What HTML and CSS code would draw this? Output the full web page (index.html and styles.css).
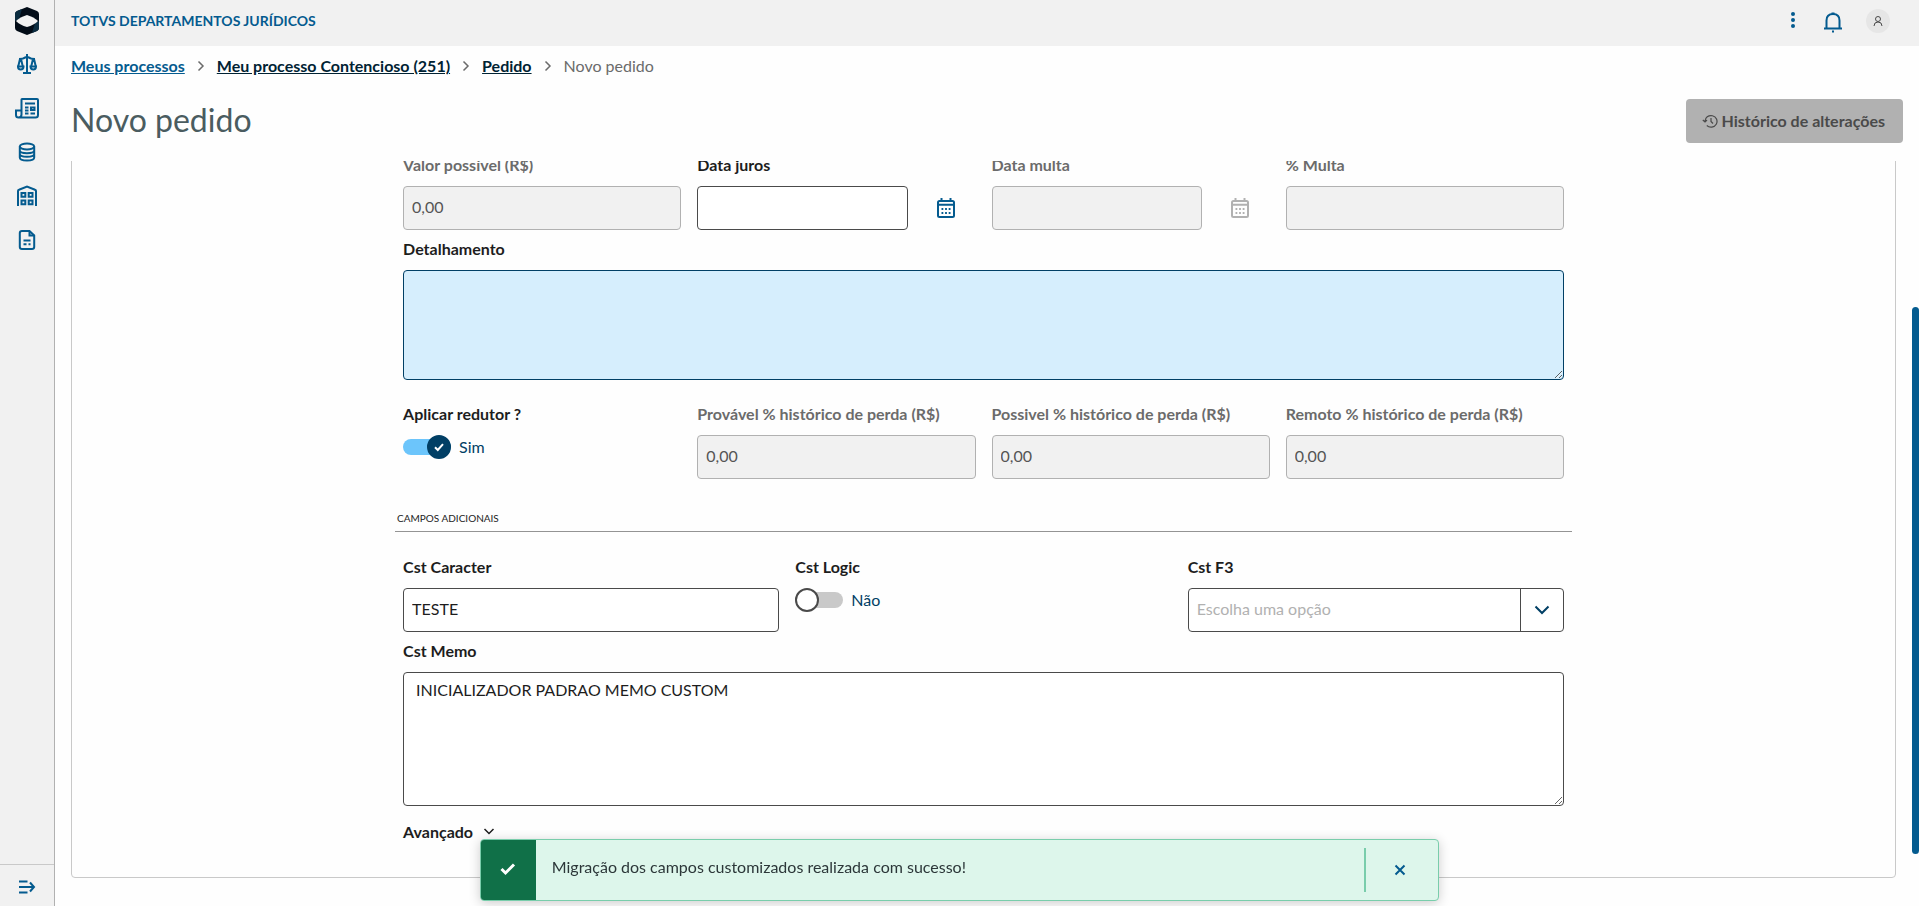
FILE: index.html
```html
<!DOCTYPE html>
<html lang="pt-BR">
<head>
    <meta charset="UTF-8">
    <meta name="viewport" content="width=device-width, initial-scale=1.0">
    <title>Novo pedido | TOTVS Departamentos Jurídicos</title>
    <link rel="stylesheet" href="styles.css">
</head>
<body>
    <div class="app">
        <aside class="sidebar">
            <svg class="logo" width="24" height="28" viewBox="0 0 24 28">
                <path d="M12 0 22 4Q24 5 24 7V21Q24 23 22 24L12 28 2 24Q0 23 0 21V7Q0 5 2 4Z" fill="#020c17"/>
                <path d="M0 7Q0 5 2 4L7 2 4 12 0 14Z" fill="#0b2c40"/>
                <path d="M24 21Q24 23 22 24L17 26 20 16 24 14Z" fill="#0b2c40"/>
                <path d="M1 14Q5 10 12 8Q19 10 23 14Q19 18 12 20Q5 18 1 14Z" fill="#f1f1f1"/>
            </svg>
            <nav class="menu">
                <a href="#" class="menu-item" aria-label="Processos">
                    <svg class="icon" width="24" height="24" viewBox="0 0 24 24">
                        <path d="M12 2V21M8 21H16M4 7Q8.500 7 10 5.500Q12 4.500 14 5.500Q15.500 7 20 7M5 7 3.200 14.500M6 7 7.800 14.500M18 7 16.200 14.500M19 7 20.800 14.500"/>
                        <path d="M3 14.500H8.500Q8.500 17.500 5.700 17.500T3 14.500ZM15.500 14.500H21Q21 17.500 18.300 17.500T15.500 14.500Z"/>
                    </svg>
                </a>
                <a href="#" class="menu-item" aria-label="Publicações">
                    <svg class="icon" width="26" height="24" viewBox="0 0 26 24">
                        <path d="M7.500 18V3.500Q7.500 3 8 3H23Q24 3 24 4V19Q24 21.500 21.500 21.500H4.500Q2 21.500 2 19V14.500H7.500V18.500Q7.500 21.500 4.500 21.500"/>
                        <path d="M11 7.500H21M11 11.500H14.500M11 14.500H14.500M11 17.500H14.500M16.500 17.500H21M17 11.500H20.500V14H17Z"/>
                    </svg>
                </a>
                <a href="#" class="menu-item" aria-label="Cadastros">
                    <svg class="icon" width="24" height="24" viewBox="0 0 24 24">
                        <ellipse cx="12" cy="6.500" rx="7.200" ry="3"/>
                        <path d="M4.800 6.500V17.500C4.800 21.500 19.200 21.500 19.200 17.500V6.500M4.800 10.500C4.800 14 19.200 14 19.200 10.500M4.800 14C4.800 17.700 19.200 17.700 19.200 14"/>
                    </svg>
                </a>
                <a href="#" class="menu-item" aria-label="Empresas">
                    <svg class="icon" width="24" height="24" viewBox="0 0 24 24">
                        <path d="M3 22V7Q3 6 4 5.700L12 2.500 20 5.700Q21 6 21 7V22"/>
                        <path d="M6.500 9H10.300V12.800H6.500ZM13.700 9H17.500V12.800H13.700ZM6.500 16.500H10.300V20.300H6.500ZM13.700 16.500H17.500V20.300H13.700Z"/>
                    </svg>
                </a>
                <a href="#" class="menu-item" aria-label="Documentos">
                    <svg class="icon" width="24" height="24" viewBox="0 0 24 24">
                        <path d="M14.500 3H7Q4.800 3 4.800 5V19Q4.800 21 7 21H17Q19.200 21 19.200 19V7.500Z"/>
                        <path d="M14.500 3V7.500H19.200M8.500 12.500H15.500M8.500 16.300H11.500M13.500 16.300H15.500"/>
                    </svg>
                </a>
            </nav>
            <button class="menu-toggle" aria-label="Expandir menu">
                <svg class="icon" width="24" height="24" viewBox="0 0 24 24">
                    <path d="M4 6.500H12.500M4 12H19M4 17.500H12.500M15 7.500 19 12 15 16.500"/>
                </svg>
            </button>
        </aside>

        <div class="page">
            <header class="toolbar">
                <span class="toolbar-title">TOTVS DEPARTAMENTOS JURÍDICOS</span>
                <div class="toolbar-actions">
                    <button class="toolbar-btn" aria-label="Mais ações">
                        <svg width="24" height="24" viewBox="0 0 24 24" fill="#045b8f">
                            <circle cx="12" cy="5" r="2"/><circle cx="12" cy="11" r="2"/><circle cx="12" cy="17" r="2"/>
                        </svg>
                    </button>
                    <button class="toolbar-btn" aria-label="Notificações">
                        <svg class="icon" width="24" height="24" viewBox="0 0 24 24">
                            <path d="M3 19.500H21M5.500 19.500V11.500Q5.500 5 12 5T18.500 11.500V19.500"/>
                            <path d="M10.500 4.500H13.500M11 22.500H13"/>
                        </svg>
                    </button>
                    <button class="toolbar-btn avatar" aria-label="Perfil">
                        <svg width="12" height="12" viewBox="0 0 12 12" fill="none" stroke="#4a4a4a">
                            <circle cx="6" cy="4" r="2.500"/><path d="M2 11Q2 7 6 7T10 11"/>
                        </svg>
                    </button>
                </div>
            </header>

            <nav class="breadcrumb">
                <a href="#" class="breadcrumb-first">Meus processos</a>
                <svg class="chevron" width="8" height="12" viewBox="0 0 8 12"><path d="M1.500 1.500 6 6 1.500 10.500"/></svg>
                <a href="#">Meu processo Contencioso (251)</a>
                <svg class="chevron" width="8" height="12" viewBox="0 0 8 12"><path d="M1.500 1.500 6 6 1.500 10.500"/></svg>
                <a href="#">Pedido</a>
                <svg class="chevron" width="8" height="12" viewBox="0 0 8 12"><path d="M1.500 1.500 6 6 1.500 10.500"/></svg>
                <span>Novo pedido</span>
            </nav>

            <div class="page-header">
                <h1>Novo pedido</h1>
                <button class="history-btn" disabled>
                    <svg width="16" height="16" viewBox="0 0 16 16" fill="none" stroke="#4a4a4a" stroke-width="1.200">
                        <path d="M3 8.500A6 5.800 0 1 1 4.800 12.500M.8 7 3 9 5 7M9 5V8.500L11 10.500"/>
                    </svg>
                    Histórico de alterações
                </button>
            </div>

            <main class="page-content">
                <div class="panel">
                    <form class="form">
                        <div class="row cols-4">
                            <div class="field">
                                <label for="valorPossivel" class="disabled">Valor possível (R$)</label>
                                <input id="valorPossivel" type="text" value="0,00" disabled>
                            </div>
                            <div class="field">
                                <label for="dataJuros">Data juros</label>
                                <div class="date-group">
                                    <input id="dataJuros" type="text">
                                    <button type="button" class="date-btn" aria-label="Abrir calendário">
                                        <svg width="20" height="24" viewBox="0 0 20 24" fill="none" stroke="currentColor" stroke-width="2">
                                            <rect x="2" y="5" width="16" height="16" rx="1.500"/>
                                            <path d="M2 8.800H18M5.500 2V5M14.500 2V5"/>
                                            <path d="M5.500 13H14.500M5.500 17H14.500" stroke-dasharray="1.800 1.800"/>
                                        </svg>
                                    </button>
                                </div>
                            </div>
                            <div class="field">
                                <label for="dataMulta" class="disabled">Data multa</label>
                                <div class="date-group">
                                    <input id="dataMulta" type="text" disabled>
                                    <button type="button" class="date-btn" aria-label="Abrir calendário" disabled>
                                        <svg width="20" height="24" viewBox="0 0 20 24" fill="none" stroke="currentColor" stroke-width="2">
                                            <rect x="2" y="5" width="16" height="16" rx="1.500"/>
                                            <path d="M2 8.800H18M5.500 2V5M14.500 2V5"/>
                                            <path d="M5.500 13H14.500M5.500 17H14.500" stroke-dasharray="1.800 1.800"/>
                                        </svg>
                                    </button>
                                </div>
                            </div>
                            <div class="field">
                                <label for="percMulta" class="disabled">% Multa</label>
                                <input id="percMulta" type="text" disabled>
                            </div>
                        </div>

                        <div class="row">
                            <div class="field">
                                <label for="detalhamento">Detalhamento</label>
                                <textarea id="detalhamento" class="detail active"></textarea>
                            </div>
                        </div>

                        <div class="row cols-4 row-spaced">
                            <div class="field">
                                <label for="redutor">Aplicar redutor ?</label>
                                <div class="switch-group">
                                    <span class="switch">
                                        <input id="redutor" type="checkbox" checked>
                                        <svg width="12" height="12" viewBox="0 0 12 12"><path d="M2 6.200 4.800 9 10 3.200"/></svg>
                                    </span>
                                    <span>Sim</span>
                                </div>
                            </div>
                            <div class="field">
                                <label for="provavel" class="disabled">Provável % histórico de perda (R$)</label>
                                <input id="provavel" type="text" value="0,00" disabled>
                            </div>
                            <div class="field">
                                <label for="possivel" class="disabled">Possivel % histórico de perda (R$)</label>
                                <input id="possivel" type="text" value="0,00" disabled>
                            </div>
                            <div class="field">
                                <label for="remoto" class="disabled">Remoto % histórico de perda (R$)</label>
                                <input id="remoto" type="text" value="0,00" disabled>
                            </div>
                        </div>

                        <h2 class="divider">CAMPOS ADICIONAIS</h2>

                        <div class="row cols-3">
                            <div class="field">
                                <label for="cstCaracter">Cst Caracter</label>
                                <input id="cstCaracter" type="text" value="TESTE">
                            </div>
                            <div class="field">
                                <label for="cstLogic">Cst Logic</label>
                                <div class="switch-group">
                                    <span class="switch">
                                        <input id="cstLogic" type="checkbox">
                                    </span>
                                    <span>Não</span>
                                </div>
                            </div>
                            <div class="field">
                                <label for="cstF3">Cst F3</label>
                                <div class="select-group">
                                    <select id="cstF3">
                                        <option>Escolha uma opção</option>
                                    </select>
                                    <span class="select-arrow">
                                        <svg width="16" height="16" viewBox="0 0 16 16"><path d="M1.500 4.500 8 11 14.500 4.500"/></svg>
                                    </span>
                                </div>
                            </div>
                        </div>

                        <div class="row">
                            <div class="field">
                                <label for="cstMemo">Cst Memo</label>
                                <textarea id="cstMemo" class="memo">INICIALIZADOR PADRAO MEMO CUSTOM</textarea>
                            </div>
                        </div>

                        <button type="button" class="advanced">
                            Avançado
                            <svg width="12" height="8" viewBox="0 0 12 8"><path d="M1.500 1 6 5.500 10.500 1"/></svg>
                        </button>
                    </form>
                </div>
            </main>
            <div class="scroll-thumb"></div>
        </div>
    </div>

    <div class="toaster" role="status">
        <div class="toaster-icon">
            <svg width="20" height="20" viewBox="0 0 20 20"><path d="M3.500 9 7.500 13 16 4.500"/></svg>
        </div>
        <p>Migração dos campos customizados realizada com sucesso!</p>
        <button class="toaster-close" aria-label="Fechar">
            <svg width="12" height="12" viewBox="0 0 12 12"><path d="M1.500 1.500 10.500 10.500M10.500 1.500 1.500 10.500"/></svg>
        </button>
    </div>
</body>
</html>
```
FILE: styles.css
```css
:root {
    --brand: #045b8f;
    --brand-dark: #013f65;
    --brand-darkest: #002233;
    --gray-bg: #f1f1f1;
    --gray-line: #c9c9c9;
    --gray-disabled: #b1b1b1;
    --gray-text: #6b6b6b;
    --text: #1d1d1d;
    --border: #4a4a4a;
    --success: #107048;
    --success-light: #ddf6eb;
    --success-line: #79cdab;
}

* {
    margin: 0;
    padding: 0;
    box-sizing: border-box;
}

body {
    background-color: #fefefe;
    color: var(--text);
    font-family: Lato, 'Open Sans', sans-serif;
    font-size: 16px;
    line-height: 24px;
}

button,
input,
select,
textarea {
    font: inherit;
    color: inherit;
}

button {
    border: none;
    background: none;
    cursor: pointer;
}

svg {
    display: block;
    flex-shrink: 0;
}

.icon {
    fill: none;
    stroke: var(--brand);
    stroke-width: 2;
}

.app {
    display: flex;
    height: 100vh;
}

/* Sidebar */
.sidebar {
    width: 55px;
    flex-shrink: 0;
    display: flex;
    flex-direction: column;
    align-items: center;
    padding-top: 7px;
    background-color: var(--gray-bg);
    border-right: 1px solid var(--gray-disabled);
}

.menu {
    flex-grow: 1;
    margin-top: 7px;
}

.menu-item {
    height: 44px;
    display: flex;
    align-items: center;
    justify-content: center;
}

.menu-toggle {
    width: 100%;
    height: 42px;
    padding-top: 2px;
    display: flex;
    align-items: center;
    justify-content: center;
    border-top: 1px solid var(--gray-line);
}

/* Page */
.page {
    position: relative;
    flex-grow: 1;
    min-width: 0;
    display: flex;
    flex-direction: column;
}

.toolbar {
    height: 46px;
    flex-shrink: 0;
    display: flex;
    justify-content: space-between;
    align-items: center;
    padding: 0 29px 4px 16px;
    background-color: var(--gray-bg);
}

.toolbar-title {
    font-size: 14px;
    font-weight: 700;
    color: var(--brand);
}

.toolbar-actions {
    display: flex;
    align-items: center;
    gap: 16px;
}

.toolbar-btn {
    width: 24px;
    height: 24px;
}

.avatar {
    display: flex;
    align-items: center;
    justify-content: center;
    margin-left: 5px;
    border-radius: 50%;
    background-color: #e6e6e6;
}

.breadcrumb {
    display: flex;
    align-items: center;
    gap: 12px;
    padding: 8px 16px 0;
    color: var(--gray-text);
}

.breadcrumb a {
    font-weight: 700;
    color: var(--brand-darkest);
}

.breadcrumb .breadcrumb-first {
    color: var(--brand);
}

.chevron {
    fill: none;
    stroke: var(--gray-text);
    stroke-width: 1.5;
}

.page-header {
    display: flex;
    justify-content: space-between;
    align-items: center;
    padding: 21px 16px 18px;
}

.page-header h1 {
    padding-bottom: 2px;
    font-size: 32px;
    font-weight: 400;
    line-height: 40px;
    color: #4a5c60;
}

.history-btn {
    height: 44px;
    display: flex;
    align-items: center;
    gap: 4px;
    padding: 0 18px 0 16px;
    border-radius: 4px;
    background-color: var(--gray-disabled);
    color: var(--border);
    font-weight: 700;
}

.page-content {
    flex-grow: 1;
    min-height: 0;
    padding: 0 23px 0 16px;
    overflow: hidden;
}

/* panel is scrolled, so its top edge stays out of view */
.panel {
    margin-top: -16px;
    padding: 0 28px 33px;
    border: 1px solid var(--gray-line);
    border-radius: 4px;
}

.form {
    width: 66.6%;
    margin: 0 auto;
}

.row {
    display: grid;
}

.cols-4 {
    grid-template-columns: repeat(4, 1fr);
}

.cols-3 {
    grid-template-columns: repeat(3, 1fr);
}

.row-spaced {
    margin-top: 15px;
}

.field {
    min-width: 0;
    padding: 7px 8px 0;
}

.field label {
    display: block;
    margin-bottom: 9px;
    font-weight: 700;
}

.field label.disabled {
    color: var(--gray-text);
}

.field input[type="text"],
.field select,
.field textarea {
    display: block;
    width: 100%;
    height: 44px;
    padding: 0 8px 3px;
    border: 1px solid var(--border);
    border-radius: 4px;
    background-color: #fff;
    outline: none;
}

.field input[type="text"]:disabled {
    border-color: var(--gray-disabled);
    background-color: var(--gray-bg);
    color: #555;
}

.field textarea {
    padding: 5px 12px;
    resize: both;
}

.field .detail {
    height: 110px;
}

.field .memo {
    height: 134px;
}

.field .active {
    border-color: var(--brand-dark);
    background-color: #d6eefd;
}

.date-group {
    display: flex;
    gap: 16px;
    padding-right: 8px;
}

.date-btn {
    width: 44px;
    flex-shrink: 0;
    display: flex;
    align-items: center;
    justify-content: center;
    color: var(--brand);
}

.date-btn:disabled {
    color: var(--gray-disabled);
}

.switch-group {
    display: flex;
    align-items: center;
    gap: 8px;
    color: var(--brand-dark);
}

.switch {
    position: relative;
    width: 48px;
    height: 24px;
    padding: 4px 0;
}

.switch input {
    appearance: none;
    display: flex;
    align-items: center;
    width: 48px;
    height: 16px;
    border-radius: 8px;
    background-color: var(--gray-line);
    cursor: pointer;
}

.switch input::before {
    content: '';
    box-sizing: border-box;
    flex-shrink: 0;
    width: 24px;
    height: 24px;
    border: 2px solid var(--border);
    border-radius: 50%;
    background-color: #fff;
}

.switch input:checked {
    justify-content: flex-end;
    background-color: #6cc5fb;
}

.switch input:checked::before {
    border-color: var(--brand-dark);
    background-color: var(--brand-dark);
}

.switch svg {
    position: absolute;
    top: 6px;
    right: 6px;
    fill: none;
    stroke: #fff;
    stroke-width: 2;
    pointer-events: none;
}

.select-group {
    position: relative;
}

.field select {
    appearance: none;
    color: var(--gray-disabled);
}

.select-arrow {
    position: absolute;
    top: 0;
    right: 0;
    width: 44px;
    height: 44px;
    display: flex;
    align-items: center;
    justify-content: center;
    border-left: 1px solid var(--border);
    pointer-events: none;
}

.select-arrow svg {
    fill: none;
    stroke: var(--brand-dark);
    stroke-width: 2;
}

.divider {
    margin: 29px 0 16px;
    padding: 0 2px 3px;
    border-bottom: 1px solid #949494;
    font-size: 10px;
    font-weight: 400;
    line-height: 20px;
}

.advanced {
    display: flex;
    align-items: center;
    gap: 10px;
    margin: 14px 8px 0;
    font-weight: 700;
}

.advanced svg {
    fill: none;
    stroke: var(--text);
    stroke-width: 1.5;
}

.scroll-thumb {
    position: absolute;
    top: 307px;
    right: 0;
    bottom: 52px;
    width: 7px;
    border-radius: 4px;
    background-color: var(--brand);
}

/* Toaster */
.toaster {
    position: fixed;
    left: 25%;
    bottom: 5px;
    width: 50%;
    height: 62px;
    display: flex;
    align-items: center;
    border: 1px solid var(--success-line);
    border-radius: 4px;
    background-color: var(--success-light);
    box-shadow: 0 2px 12px rgba(0, 0, 0, 0.2);
    overflow: hidden;
}

.toaster-icon {
    width: 55px;
    height: 100%;
    display: flex;
    align-items: center;
    justify-content: center;
    background-color: var(--success);
}

.toaster svg {
    fill: none;
    stroke: var(--brand);
    stroke-width: 2;
}

.toaster .toaster-icon svg {
    stroke: #fff;
    stroke-width: 3;
}

.toaster p {
    flex-grow: 1;
    padding: 0 16px 6px;
    color: #2c3739;
}

.toaster-close {
    width: 74px;
    height: 44px;
    display: flex;
    align-items: center;
    justify-content: center;
    padding-right: 4px;
    border-left: 2px solid var(--success-line);
}
```
